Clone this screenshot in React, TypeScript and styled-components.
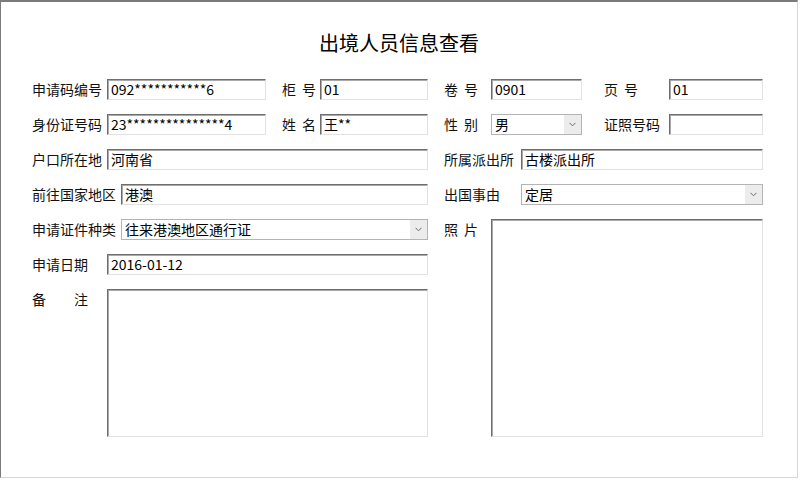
import React from "react";
import styled, { createGlobalStyle } from "styled-components";

const Global = createGlobalStyle`
  html, body { margin: 0; padding: 0; background: #ffffff; }
  body { font-family: "Noto Sans CJK SC", "Liberation Sans", sans-serif; }
  * { box-sizing: border-box; }
`;

const Window = styled.div`
  width: 798px;
  height: 478px;
  background: #ffffff;
  border-top: 2px solid #7b7b7b;
  border-left: 1px solid #7b7b7b;
  border-right: 1px solid #d6d6d6;
  border-bottom: 1px solid #d6d6d6;
  display: flex;
  flex-direction: column;
`;

const Title = styled.h1`
  margin: 0;
  padding-top: 29px;
  height: 77px;
  text-align: center;
  font-size: 20px;
  line-height: 24px;
  font-weight: 400;
  color: #000;
`;

const Form = styled.div`
  display: grid;
  padding-left: 31px;
  grid-template-columns: 75px 14px 145px 16px 38px 108px 16px 47px 30px 61px 22px 65px 94px;
  grid-template-rows: repeat(6, 21px) 148px;
  row-gap: 14px;
`;

type Place = { $col: string; $row: string };

const Label = styled.div<Place & { $w?: number; $top?: boolean }>`
  grid-column: ${(p) => p.$col};
  grid-row: ${(p) => p.$row};
  align-self: ${(p) => (p.$top ? "start" : "center")};
  display: flex;
  justify-content: space-between;
  width: ${(p) => (p.$w ? `${p.$w}px` : "auto")};
  font-size: 14px;
  line-height: 21px;
  color: #111;
  white-space: nowrap;
`;

const sunken = `
  background: #ffffff;
  border-top: 1px solid #6e6e6e;
  border-left: 1px solid #6e6e6e;
  border-right: 1px solid #e2e2e2;
  border-bottom: 1px solid #e2e2e2;
  box-shadow: inset 1px 1px 0 #a9a9a9;
`;

const TextBox = styled.div<Place>`
  grid-column: ${(p) => p.$col};
  grid-row: ${(p) => p.$row};
  ${sunken}
  height: 21px;
  padding: 0 3px;
  font-size: 14px;
  line-height: 19px;
  color: #000;
  white-space: nowrap;
  overflow: hidden;
`;

const Area = styled.div<Place>`
  grid-column: ${(p) => p.$col};
  grid-row: ${(p) => p.$row};
  ${sunken}
`;

const Select = styled.div<Place>`
  grid-column: ${(p) => p.$col};
  grid-row: ${(p) => p.$row};
  height: 21px;
  display: flex;
  background: #ffffff;
  border: 1px solid #b4b4b4;
`;

const SelectValue = styled.div`
  flex: 1;
  padding: 0 3px;
  font-size: 14px;
  line-height: 19px;
  color: #000;
  white-space: nowrap;
`;

const SelectArrow = styled.div`
  width: 17px;
  background: #ececec;
  display: flex;
  align-items: center;
  justify-content: center;
`;

const Chevron = () => (
  <svg width="7" height="5" viewBox="0 0 7 5">
    <path d="M0.5 0.8 L3.5 3.8 L6.5 0.8" fill="none" stroke="#6a6a6a" strokeWidth="1" />
  </svg>
);

const Combo = ({ col, row, value }: { col: string; row: string; value: string }) => (
  <Select $col={col} $row={row}>
    <SelectValue>{value}</SelectValue>
    <SelectArrow>
      <Chevron />
    </SelectArrow>
  </Select>
);

const Spread = ({ text }: { text: string }) => (
  <>
    {text.split("").map((c, i) => (
      <span key={i}>{c}</span>
    ))}
  </>
);

export default function App() {
  return (
    <>
      <Global />
      <Window>
        <Title>出境人员信息查看</Title>
        <Form>
          {/* row 1 */}
          <Label $col="1 / 2" $row="1">申请码编号</Label>
          <TextBox $col="2 / 4" $row="1">092***********6</TextBox>
          <Label $col="5 / 6" $row="1" $w={34}><Spread text="柜号" /></Label>
          <TextBox $col="6 / 7" $row="1">01</TextBox>
          <Label $col="8 / 9" $row="1" $w={34}><Spread text="卷号" /></Label>
          <TextBox $col="9 / 11" $row="1">0901</TextBox>
          <Label $col="12 / 13" $row="1" $w={34}><Spread text="页号" /></Label>
          <TextBox $col="13 / 14" $row="1">01</TextBox>

          {/* row 2 */}
          <Label $col="1 / 2" $row="2">身份证号码</Label>
          <TextBox $col="2 / 4" $row="2">23***************4</TextBox>
          <Label $col="5 / 6" $row="2" $w={34}><Spread text="姓名" /></Label>
          <TextBox $col="6 / 7" $row="2">王**</TextBox>
          <Label $col="8 / 9" $row="2" $w={34}><Spread text="性别" /></Label>
          <Combo col="9 / 11" row="2" value="男" />
          <Label $col="12 / 13" $row="2">证照号码</Label>
          <TextBox $col="13 / 14" $row="2"></TextBox>

          {/* row 3 */}
          <Label $col="1 / 2" $row="3">户口所在地</Label>
          <TextBox $col="2 / 7" $row="3">河南省</TextBox>
          <Label $col="8 / 10" $row="3">所属派出所</Label>
          <TextBox $col="10 / 14" $row="3">古楼派出所</TextBox>

          {/* row 4 */}
          <Label $col="1 / 3" $row="4">前往国家地区</Label>
          <TextBox $col="3 / 7" $row="4">港澳</TextBox>
          <Label $col="8 / 10" $row="4">出国事由</Label>
          <Combo col="10 / 14" row="4" value="定居" />

          {/* row 5 */}
          <Label $col="1 / 3" $row="5">申请证件种类</Label>
          <Combo col="3 / 7" row="5" value="往来港澳地区通行证" />
          <Label $col="8 / 9" $row="5" $w={34} $top><Spread text="照片" /></Label>
          <Area $col="9 / 14" $row="5 / 8" />

          {/* row 6 */}
          <Label $col="1 / 2" $row="6">申请日期</Label>
          <TextBox $col="2 / 7" $row="6">2016-01-12</TextBox>

          {/* row 7 */}
          <Label $col="1 / 2" $row="7" $w={56} $top><Spread text="备注" /></Label>
          <Area $col="2 / 7" $row="7" />
        </Form>
      </Window>
    </>
  );
}
